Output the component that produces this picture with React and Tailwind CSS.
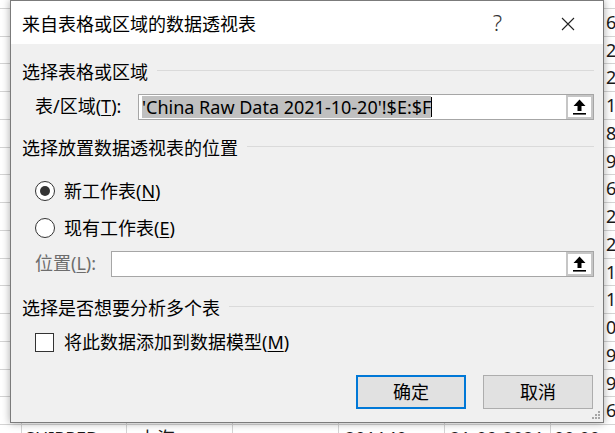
import React from 'react';

const rightDigits = ['', '6', '2', '2', '1', '8', '9', '6', '2', '2', '1', '1', '0', '9', '9', '6'];

const UploadIcon = () => (
    <svg width="13" height="16" viewBox="0 0 13 16">
        <path d="M6.5 0.5 L12.5 7 L8.5 7 L8.5 12 L4.5 12 L4.5 7 L0.5 7 Z" fill="#000" />
        <rect x="0" y="14" width="13" height="1.6" fill="#000" />
    </svg>
);

const RefInput = ({ children }) => (
    <div className="flex-1 h-[26px] flex border border-[#a6a6a6] bg-white">
        <div className="flex-1 flex items-center pl-[3px] overflow-hidden">{children}</div>
        <div className="w-[27px] h-full border-2 border-[#c6c6c6] bg-white flex items-center justify-center">
            <UploadIcon />
        </div>
    </div>
);

const Heading = ({ children }) => (
    <div className="h-[24px] flex items-center">
        <span className="text-[18px] leading-[24px] text-black whitespace-nowrap">{children}</span>
        <div className="flex-1 h-px bg-[#dadada] ml-[9px] -mt-[4px]" />
    </div>
);

const Sheet = () => (
    <div className="-mt-[19px]">
        {rightDigits.map((d, i) => (
            <div key={i} className="h-[27.75px] border-b border-[#d4d4d4] grid grid-cols-[22px_105px_106px_106px_106px_106px_1fr]">
                <div className="border-r border-[#d4d4d4]" />
                <div className="border-r border-[#d4d4d4]" />
                <div className="border-r border-[#d4d4d4]" />
                <div className="border-r border-[#d4d4d4]" />
                <div className="border-r border-[#d4d4d4]" />
                <div className="border-r border-[#d4d4d4]" />
                <div className="pl-[55px] overflow-hidden whitespace-nowrap text-[18px] leading-[27px] text-[#1a1a1a]">
                    {d}
                </div>
            </div>
        ))}
        <div className="h-[27.75px] grid grid-cols-[22px_105px_106px_106px_106px_106px_1fr] text-[18px] leading-[27px] text-[#1a1a1a]">
            <div className="border-r border-[#d4d4d4]" />
            <div className="border-r border-[#d4d4d4] pl-[3px] overflow-hidden whitespace-nowrap">SHIPPED</div>
            <div className="border-r border-[#d4d4d4] pl-[12px] overflow-hidden whitespace-nowrap">上海</div>
            <div className="border-r border-[#d4d4d4]" />
            <div className="border-r border-[#d4d4d4] pl-[6px] overflow-hidden whitespace-nowrap">201140</div>
            <div className="border-r border-[#d4d4d4] pl-[5px] overflow-hidden whitespace-nowrap">21-09-2021</div>
            <div className="pl-[3px] overflow-hidden whitespace-nowrap">00:00</div>
        </div>
    </div>
);

export default function App() {
    return (
        <div className="relative w-[615px] h-[433px] overflow-hidden bg-white font-['Noto_Sans','Noto_Sans_CJK_SC',sans-serif]">
            <Sheet />

            {/* dialog window */}
            <div className="absolute left-[10px] top-0 w-[594px] h-[423px] border border-[#7b7b7b] bg-[#f0f0f0] shadow-[0_0_8px_rgba(0,0,0,0.35)] flex flex-col">
                <div className="h-[43px] bg-white flex items-center pl-[11px] pr-[28px] pt-[3px]">
                    <span className="text-[18px] text-black flex-1">来自表格或区域的数据透视表</span>
                    <span className="text-[22px] font-light text-[#333] mr-[59px] -mt-[3px]">?</span>
                    <svg width="14" height="14" viewBox="0 0 14 14">
                        <path d="M1 1 L13 13 M13 1 L1 13" stroke="#222" strokeWidth="1.1" />
                    </svg>
                </div>

                <div className="flex-1 pl-[11px] pr-[9px] pt-[16px] relative">
                    <Heading>选择表格或区域</Heading>

                    <div className="mt-[9px] flex items-center">
                        <span className="text-[18px] text-black ml-[13px] w-[103px] whitespace-nowrap">
                            表/区域(<span className="underline underline-offset-2">T</span>):
                        </span>
                        <RefInput>
                            <span className="bg-[#c0c0c0] text-[18px] leading-[22px] text-black whitespace-nowrap">'China Raw Data 2021-10-20'!$E:$F</span>
                            <span className="w-px h-[20px] bg-black" />
                        </RefInput>
                    </div>

                    <div className="mt-[16px]">
                        <Heading>选择放置数据透视表的位置</Heading>
                    </div>

                    <div className="mt-[19px] h-[24px] flex items-center ml-[13px]">
                        <span className="w-[20px] h-[20px] rounded-full border border-[#333] bg-white flex items-center justify-center">
                            <span className="w-[10px] h-[10px] rounded-full bg-[#333]" />
                        </span>
                        <span className="ml-[9px] text-[18px] text-black">新工作表(<span className="underline underline-offset-2">N</span>)</span>
                    </div>

                    <div className="mt-[13px] h-[24px] flex items-center ml-[13px]">
                        <span className="w-[20px] h-[20px] rounded-full border border-[#333] bg-white" />
                        <span className="ml-[9px] text-[18px] text-black">现有工作表(<span className="underline underline-offset-2">E</span>)</span>
                    </div>

                    <div className="mt-[10px] flex items-center">
                        <span className="text-[18px] text-[#6d6d6d] ml-[13px] w-[76px] whitespace-nowrap">
                            位置(<span className="underline underline-offset-2">L</span>):
                        </span>
                        <RefInput />
                    </div>

                    <div className="mt-[19px]">
                        <Heading>选择是否想要分析多个表</Heading>
                    </div>

                    <div className="mt-[10px] h-[24px] flex items-center ml-[13px]">
                        <span className="w-[19px] h-[19px] border border-[#333] bg-white" />
                        <span className="ml-[10px] text-[18px] text-black">将此数据添加到数据模型(<span className="underline underline-offset-2">M</span>)</span>
                    </div>

                    <div className="mt-[21px] flex justify-end gap-[17px] pr-px">
                        <button className="w-[110px] h-[34px] border-2 border-[#0078d7] bg-[#e1e1e1] text-[18px] text-black">确定</button>
                        <button className="w-[110px] h-[34px] border border-[#adadad] bg-[#e1e1e1] text-[18px] text-black">取消</button>
                    </div>

                    {/* resize grip */}
                    <svg width="9" height="9" viewBox="0 0 9 9" className="absolute right-[2px] bottom-[2px]">
                        <rect x="6" y="0" width="2" height="2" fill="#a6a6a6" />
                        <rect x="3" y="3" width="2" height="2" fill="#a6a6a6" />
                        <rect x="6" y="3" width="2" height="2" fill="#a6a6a6" />
                        <rect x="0" y="6" width="2" height="2" fill="#a6a6a6" />
                        <rect x="3" y="6" width="2" height="2" fill="#a6a6a6" />
                        <rect x="6" y="6" width="2" height="2" fill="#a6a6a6" />
                    </svg>
                </div>
            </div>
        </div>
    );
}
